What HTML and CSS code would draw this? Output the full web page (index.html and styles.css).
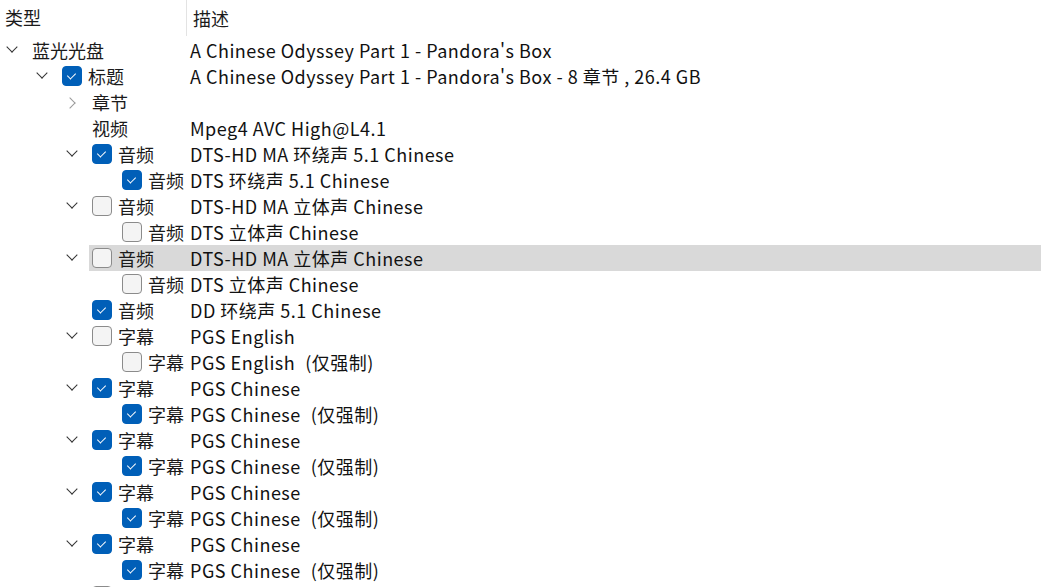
FILE: index.html
```html
<!DOCTYPE html>
<html lang="zh-CN">
<head>
	<meta charset="UTF-8">
	<title>光盘内容</title>
	<link rel="stylesheet" href="styles.css">
</head>
<body>
	<div class="tree">
		<div class="head">
			<div class="col1">类型</div>
			<div class="col2">描述</div>
		</div>
		<ul class="rows">
			<li class="row lv0">
				<span class="exp down"></span>
				<div class="item"><div class="key"><span class="name">蓝光光盘</span></div><span class="desc">A Chinese Odyssey Part 1 - Pandora's Box</span></div>
			</li>
			<li class="row lv1">
				<span class="exp down"></span>
				<div class="item"><div class="key"><span class="chk on"></span><span class="name">标题</span></div><span class="desc">A Chinese Odyssey Part 1 - Pandora's Box - 8 章节 , 26.4 GB</span></div>
			</li>
			<li class="row lv2">
				<span class="exp right"></span>
				<div class="item"><div class="key"><span class="name">章节</span></div><span class="desc"></span></div>
			</li>
			<li class="row lv2">
				<span class="exp"></span>
				<div class="item"><div class="key"><span class="name">视频</span></div><span class="desc">Mpeg4 AVC High@L4.1</span></div>
			</li>
			<li class="row lv2">
				<span class="exp down"></span>
				<div class="item"><div class="key"><span class="chk on"></span><span class="name">音频</span></div><span class="desc">DTS-HD MA 环绕声 5.1 Chinese</span></div>
			</li>
			<li class="row lv3">
				<span class="exp"></span>
				<div class="item"><div class="key"><span class="chk on"></span><span class="name">音频</span></div><span class="desc">DTS 环绕声 5.1 Chinese</span></div>
			</li>
			<li class="row lv2">
				<span class="exp down"></span>
				<div class="item"><div class="key"><span class="chk"></span><span class="name">音频</span></div><span class="desc">DTS-HD MA 立体声 Chinese</span></div>
			</li>
			<li class="row lv3">
				<span class="exp"></span>
				<div class="item"><div class="key"><span class="chk"></span><span class="name">音频</span></div><span class="desc">DTS 立体声 Chinese</span></div>
			</li>
			<li class="row lv2 sel">
				<span class="exp down"></span>
				<div class="item"><div class="key"><span class="chk"></span><span class="name">音频</span></div><span class="desc">DTS-HD MA 立体声 Chinese</span></div>
			</li>
			<li class="row lv3">
				<span class="exp"></span>
				<div class="item"><div class="key"><span class="chk"></span><span class="name">音频</span></div><span class="desc">DTS 立体声 Chinese</span></div>
			</li>
			<li class="row lv2">
				<span class="exp"></span>
				<div class="item"><div class="key"><span class="chk on"></span><span class="name">音频</span></div><span class="desc">DD 环绕声 5.1 Chinese</span></div>
			</li>
			<li class="row lv2">
				<span class="exp down"></span>
				<div class="item"><div class="key"><span class="chk"></span><span class="name">字幕</span></div><span class="desc">PGS English</span></div>
			</li>
			<li class="row lv3">
				<span class="exp"></span>
				<div class="item"><div class="key"><span class="chk"></span><span class="name">字幕</span></div><span class="desc">PGS English<span class="note">(仅强制)</span></span></div>
			</li>
			<li class="row lv2">
				<span class="exp down"></span>
				<div class="item"><div class="key"><span class="chk on"></span><span class="name">字幕</span></div><span class="desc">PGS Chinese</span></div>
			</li>
			<li class="row lv3">
				<span class="exp"></span>
				<div class="item"><div class="key"><span class="chk on"></span><span class="name">字幕</span></div><span class="desc">PGS Chinese<span class="note">(仅强制)</span></span></div>
			</li>
			<li class="row lv2">
				<span class="exp down"></span>
				<div class="item"><div class="key"><span class="chk on"></span><span class="name">字幕</span></div><span class="desc">PGS Chinese</span></div>
			</li>
			<li class="row lv3">
				<span class="exp"></span>
				<div class="item"><div class="key"><span class="chk on"></span><span class="name">字幕</span></div><span class="desc">PGS Chinese<span class="note">(仅强制)</span></span></div>
			</li>
			<li class="row lv2">
				<span class="exp down"></span>
				<div class="item"><div class="key"><span class="chk on"></span><span class="name">字幕</span></div><span class="desc">PGS Chinese</span></div>
			</li>
			<li class="row lv3">
				<span class="exp"></span>
				<div class="item"><div class="key"><span class="chk on"></span><span class="name">字幕</span></div><span class="desc">PGS Chinese<span class="note">(仅强制)</span></span></div>
			</li>
			<li class="row lv2">
				<span class="exp down"></span>
				<div class="item"><div class="key"><span class="chk on"></span><span class="name">字幕</span></div><span class="desc">PGS Chinese</span></div>
			</li>
			<li class="row lv3">
				<span class="exp"></span>
				<div class="item"><div class="key"><span class="chk on"></span><span class="name">字幕</span></div><span class="desc">PGS Chinese<span class="note">(仅强制)</span></span></div>
			</li>
			<!-- 下一行只露出复选框的上沿 -->
			<li class="row lv2">
				<span class="exp down"></span>
				<div class="item"><div class="key"><span class="chk"></span></div></div>
			</li>
		</ul>
	</div>
</body>
</html>
```
FILE: styles.css
```css
*{ margin:0; padding:0; box-sizing:border-box; }
li{ list-style:none; }

html,body{ width:1041px; height:587px; overflow:hidden; background:#fff; }
body{ font-family:"Noto Sans CJK SC", sans-serif; font-size:18px; color:#1b1b1b; }

/* 表头 */
.tree .head{ display:flex; height:37px; align-items:center; }
.tree .head .col1{ width:187px; height:36px; padding:0 0 2px 5px; display:flex; align-items:center; border-right:1px solid #e3e3e3; align-self:flex-start; }
.tree .head .col2{ padding-left:6px; padding-bottom:2px; }

/* 行 */
.tree .row{ display:flex; height:26px; align-items:center; white-space:nowrap; }
.tree .lv1{ padding-left:30px; }
.tree .lv2{ padding-left:60px; }
.tree .lv3{ padding-left:90px; }

.tree .exp{ flex:none; width:24px; height:26px; margin-right:5px; position:relative; }
.tree .exp.down::before{ content:""; position:absolute; left:8px; top:6px; width:7px; height:7px; border-right:1.5px solid #333; border-bottom:1.5px solid #333; transform:rotate(45deg); }
.tree .exp.right::before{ content:""; position:absolute; left:6px; top:10px; width:7px; height:7px; border-right:1.5px solid #9a9a9a; border-bottom:1.5px solid #9a9a9a; transform:rotate(-45deg); }

.tree .item{ flex:1; display:flex; align-items:center; height:26px; padding-left:3px; }
.tree .sel .item{ background:#d9d9d9; }
.tree .key{ flex:none; display:flex; align-items:center; }
.tree .lv0 .key{ width:158px; }
.tree .lv1 .key{ width:128px; }
.tree .lv2 .key{ width:98px; }
.tree .lv3 .key{ width:68px; }

.tree .chk{ flex:none; width:20px; height:20px; margin-right:6px; border:1px solid #8b8b8b; border-radius:4px; background:#f4f4f4; position:relative; }
.tree .chk.on{ background:#005fb8; border-color:#005fb8; }
.tree .chk.on::after{ content:""; position:absolute; left:6px; top:4px; width:4px; height:7px; border-right:1.3px solid #fff; border-bottom:1.3px solid #fff; transform:rotate(45deg); }

.tree .desc{ color:#111; letter-spacing:0.5px; }
.tree .desc .note{ margin-left:10px; }
```
